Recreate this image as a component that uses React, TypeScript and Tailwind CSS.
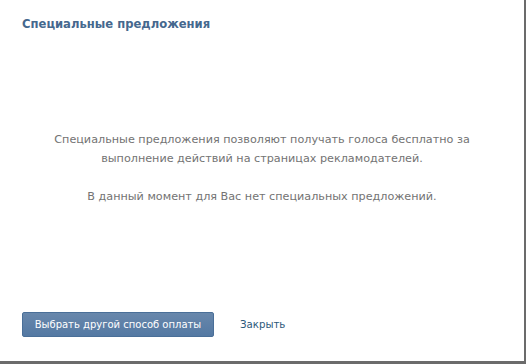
export default function App() {
  return (
    <div className="w-[527px] h-[364px] bg-white font-['DejaVu_Sans',sans-serif]">
      <div className="w-[526px] h-[364px] flex flex-col bg-white border-r-2 border-b-[3px] border-[#6b6b6b]">
        <div className="h-[45px] px-[22px] pt-[16px] text-[11.6px] font-bold text-[#45688e] leading-[16px]">
          Специальные предложения
        </div>
        <div className="flex-1 flex flex-col items-center pt-[85px] text-[11.2px] leading-[19px] text-[#737373] text-center">
          <p>
            Специальные предложения позволяют получать голоса бесплатно за
            <br />
            выполнение действий на страницах рекламодателей.
          </p>
          <p className="mt-[19px]">
            В данный момент для Вас нет специальных предложений.
          </p>
        </div>
        <div className="flex items-center px-[22px] pb-[24px] gap-[26px]">
          <button className="h-[25px] w-[192px] rounded-[2px] border border-[#4a6f98] bg-gradient-to-b from-[#6887ab] to-[#5479a3] text-white text-[10px]">
            Выбрать другой способ оплаты
          </button>
          <a href="#" className="text-[10.2px] text-[#2b587a]">
            Закрыть
          </a>
        </div>
      </div>
    </div>
  );
}
